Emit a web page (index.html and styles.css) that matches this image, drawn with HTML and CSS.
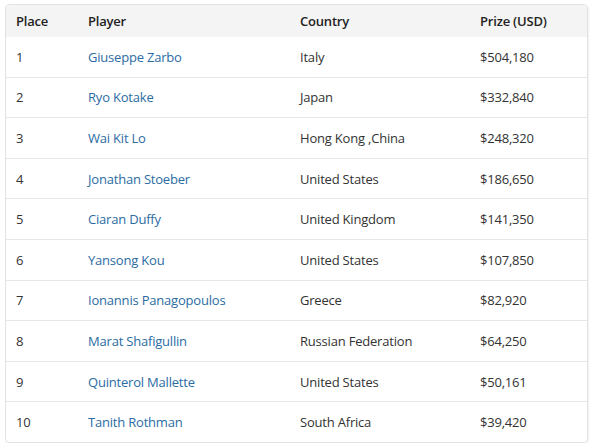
FILE: index.html
```html
<!DOCTYPE html>
<html>
<head>
<meta charset="utf-8">
<link rel="stylesheet" href="styles.css">
</head>
<body>
<div class="card">
<table class="results">
<thead>
<tr><th class="c-place">Place</th><th class="c-player">Player</th><th class="c-country">Country</th><th class="c-prize">Prize (USD)</th></tr>
</thead>
<tbody>
<tr><td>1</td><td><a href="#">Giuseppe Zarbo</a></td><td>Italy</td><td>$504,180</td></tr>
<tr><td>2</td><td><a href="#">Ryo Kotake</a></td><td>Japan</td><td>$332,840</td></tr>
<tr><td>3</td><td><a href="#">Wai Kit Lo</a></td><td>Hong Kong ,China</td><td>$248,320</td></tr>
<tr><td>4</td><td><a href="#">Jonathan Stoeber</a></td><td>United States</td><td>$186,650</td></tr>
<tr><td>5</td><td><a href="#">Ciaran Duffy</a></td><td>United Kingdom</td><td>$141,350</td></tr>
<tr><td>6</td><td><a href="#">Yansong Kou</a></td><td>United States</td><td>$107,850</td></tr>
<tr><td>7</td><td><a href="#">Ionannis Panagopoulos</a></td><td>Greece</td><td>$82,920</td></tr>
<tr><td>8</td><td><a href="#">Marat Shafigullin</a></td><td>Russian Federation</td><td>$64,250</td></tr>
<tr><td>9</td><td><a href="#">Quinterol Mallette</a></td><td>United States</td><td>$50,161</td></tr>
<tr><td>10</td><td><a href="#">Tanith Rothman</a></td><td>South Africa</td><td>$39,420</td></tr>
</tbody>
</table>
</div>
</body>
</html>
```
FILE: styles.css
```css
html, body {
  margin: 0;
  padding: 0;
  background: #ffffff;
}
body {
  padding: 4px 6px 0 5px;
  font-family: "Open Sans", "Noto Sans", sans-serif;
  font-size: 13px;
  letter-spacing: -0.2px;
  color: #333333;
}
.card {
  width: 581px;
  border: 1px solid #e3e3e3;
  border-radius: 4px;
  overflow: hidden;
  box-shadow: 1px 1px 2px rgba(0,0,0,0.06);
}
.results {
  width: 100%;
  border-collapse: collapse;
  table-layout: fixed;
}
.results th {
  background: #f4f4f4;
  font-weight: 600;
  color: #222222;
  text-align: left;
  height: 32px;
  padding: 0 0 0 10px;
}
.results td {
  height: 39.62px;
  padding: 0 0 0 10px;
  border-top: 1px solid #e6e6e6;
}
.results tbody tr:first-child td {
  border-top: none;
}
.c-place { width: 62px; }
.c-player { width: 202px; }
.c-country { width: 170px; }
.results a {
  color: #2b6ca3;
  text-decoration: none;
}
```
